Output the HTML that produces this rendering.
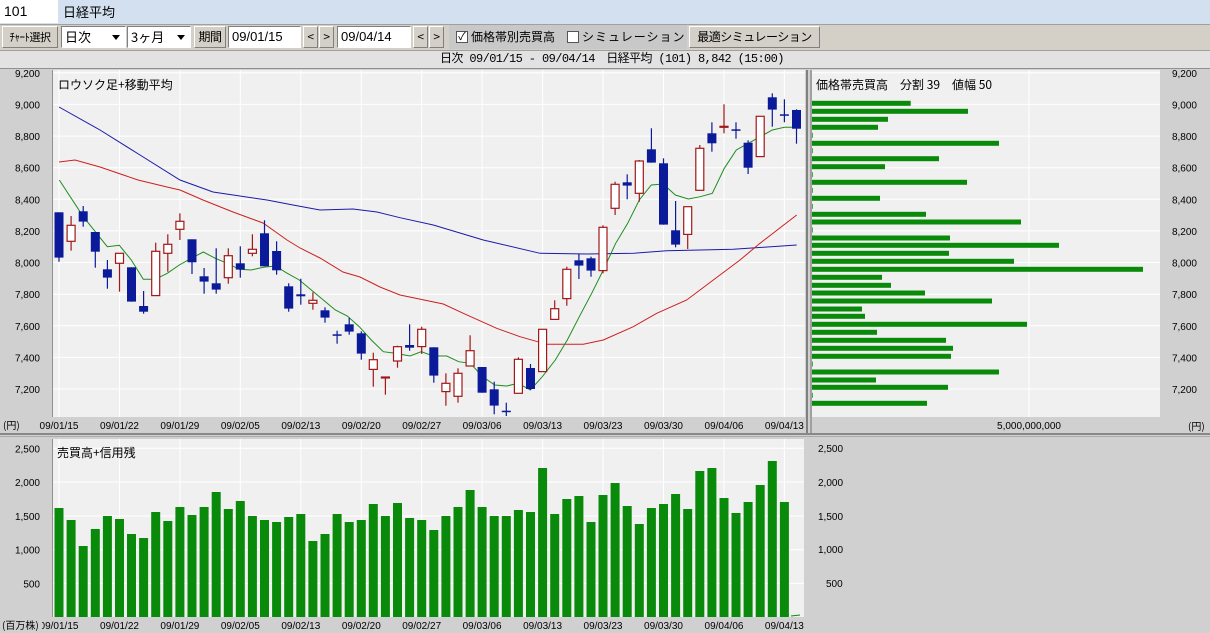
<!DOCTYPE html>
<html><head><meta charset="utf-8">
<style>
*{margin:0;padding:0;box-sizing:border-box}
body{width:1210px;height:633px;overflow:hidden;background:#d4d0c8;font-family:"Liberation Sans","Noto Sans CJK JP",sans-serif;font-size:12px;position:relative}
.a{position:absolute}
.btn{position:absolute;background:#d4d0c8;border:1px solid;border-color:#fff #808080 #808080 #fff;font-size:12px;text-align:center;line-height:20px;height:22px;top:26px;font-family:"Noto Sans CJK JP",sans-serif;letter-spacing:-0.5px}
.inp{position:absolute;background:#fff;border:1px solid;border-color:#808080 #fff #fff #808080;height:22px;top:26px;font-size:13px;line-height:20px;padding-left:3px;font-family:"Liberation Sans","Noto Sans CJK JP",sans-serif}
.sel:after{content:"";position:absolute;right:5px;top:8px;border:4px solid transparent;border-top:5px solid #000}
svg{position:absolute;left:0;top:0}
</style></head><body>
<div class="a" style="left:0;top:0;width:1210px;height:24px;background:#d3e0ef"></div>
<div class="a" style="left:0;top:0;width:58px;height:23px;background:#fff;font-size:14px;line-height:23px;padding-left:4px">101</div>
<div class="a" style="left:63px;top:0;height:23px;line-height:23px;font-size:13px;font-family:'Noto Sans CJK JP',sans-serif">日経平均</div>
<div class="a" style="left:0;top:24px;width:1210px;height:26px;background:#d4d0c8;border-top:1px solid #a0a0a0"></div>
<div class="btn" style="left:2px;width:56px;font-size:11px">ﾁｬｰﾄ選択</div>
<div class="inp sel" style="left:61px;width:65px;font-family:'Noto Sans CJK JP',sans-serif">日次</div>
<div class="inp sel" style="left:127px;width:64px;font-family:'Noto Sans CJK JP',sans-serif">3ヶ月</div>
<div class="btn" style="left:194px;width:32px">期間</div>
<div class="inp" style="left:228px;width:73px">09/01/15</div>
<div class="btn" style="left:303px;width:15px">&lt;</div>
<div class="btn" style="left:319px;width:15px">&gt;</div>
<div class="inp" style="left:337px;width:74px">09/04/14</div>
<div class="btn" style="left:413px;width:15px">&lt;</div>
<div class="btn" style="left:429px;width:15px">&gt;</div>
<div class="a" style="left:449px;top:25px;width:238px;height:24px;background:#c8c8c8"></div>
<div class="a" style="left:456px;top:31px;width:12px;height:12px;background:#fff;border:1px solid #555;font-size:11px;line-height:10px;text-align:center">✓</div>
<div class="a" style="left:471px;top:27px;font-size:12px;line-height:20px;font-family:'Noto Sans CJK JP',sans-serif">価格帯別売買高</div>
<div class="a" style="left:567px;top:31px;width:12px;height:12px;background:#fff;border:1px solid #555"></div>
<div class="a" style="left:582px;top:27px;font-size:12px;line-height:20px;font-family:'Noto Sans CJK JP',sans-serif;letter-spacing:1px">シミュレーション</div>
<div class="btn" style="left:689px;width:131px">最適シミュレーション</div>
<div class="a" style="left:0;top:50px;width:1210px;height:19px;background:#e2e2e2;border-top:1px solid #a0a0a0;border-bottom:1px solid #909090"></div>
<div class="a" style="left:440px;top:50px;line-height:19px;font-size:12px;font-family:'Liberation Mono','Noto Sans CJK JP',monospace;white-space:pre;letter-spacing:-0.6px">日次 09/01/15 - 09/04/14　日経平均 (101) 8,842 (15:00)</div>
<svg id="s" width="1210" height="633" viewBox="0 0 1210 633" style="top:0"></svg>
<script>
const s=document.getElementById('s');let h='';
const X=k=>59+12.09*k;
// backgrounds
h+='<rect x="0" y="69" width="1210" height="564" fill="#d0d0d0"/>';
h+='<rect x="53" y="70" width="752" height="347" fill="#f0f0f0"/>';
h+='<rect x="812" y="70" width="348" height="347" fill="#f0f0f0"/>';
h+='<rect x="53" y="439" width="751" height="178" fill="#f0f0f0"/>';
h+='<rect x="52" y="70" width="1" height="347" fill="#909090"/><rect x="52" y="439" width="1" height="178" fill="#909090"/>';
h+='<rect x="806" y="70" width="2" height="363" fill="#808080"/><rect x="810" y="70" width="2" height="363" fill="#a0a0a0"/>';
h+='<rect x="0" y="433" width="1210" height="2" fill="#888"/><rect x="0" y="436" width="1210" height="1" fill="#aaa"/>';
// price gridlines
const prices=[9200,9000,8800,8600,8400,8200,8000,7800,7600,7400,7200];
const PY=p=>199.3+(8400-p)*0.1581;
prices.forEach(p=>{const y=PY(p).toFixed(1);
h+=`<line x1="53" x2="805" y1="${y}" y2="${y}" stroke="#fff"/>`;
h+=`<line x1="812" x2="1160" y1="${y}" y2="${y}" stroke="#fff"/>`;
const t=(p+'').replace(/(\d)(\d{3})$/,'$1,$2');
h+=`<text x="40" y="${(+y+4).toFixed(1)}" text-anchor="end" font-size="10" font-family="Liberation Sans">${t}</text>`;
h+=`<text x="1197" y="${(+y+4).toFixed(1)}" text-anchor="end" font-size="10" font-family="Liberation Sans">${t}</text>`;});
h+='<line x1="1029" x2="1029" y1="70" y2="417" stroke="#fff"/>';
// vol gridlines
[[2500,448.3],[2000,482],[1500,516],[1000,549.7],[500,583.4]].forEach(([v,y])=>{
h+=`<line x1="53" x2="804" y1="${y}" y2="${y}" stroke="#fff"/>`;
const t=v>=1000?(v+'').replace(/(\d)(\d{3})$/,'$1,$2'):v;
h+=`<text x="40" y="${y+4}" text-anchor="end" font-size="10" font-family="Liberation Sans">${t}</text>`;});
h+='<text x="1022" y="${0}" font-size="10"></text>';
h+='<text x="818" y="452" font-size="10" font-family="Liberation Sans">2,500</text>';
h+='<text x="818" y="486" font-size="10" font-family="Liberation Sans">2,000</text>';
h+='<text x="818" y="520" font-size="10" font-family="Liberation Sans">1,500</text>';
h+='<text x="818" y="553" font-size="10" font-family="Liberation Sans">1,000</text>';
h+='<text x="826" y="587" font-size="10" font-family="Liberation Sans">500</text>';
// date gridlines
const dates=['09/01/15','09/01/22','09/01/29','09/02/05','09/02/13','09/02/20','09/02/27','09/03/06','09/03/13','09/03/23','09/03/30','09/04/06','09/04/13'];
dates.forEach((d,i)=>{const x=X(i*5).toFixed(1);
h+=`<line x1="${x}" x2="${x}" y1="70" y2="417" stroke="#fff"/><line x1="${x}" x2="${x}" y1="439" y2="617" stroke="#fff"/>`;
h+=`<text x="${x}" y="429" text-anchor="middle" font-size="10" font-family="Liberation Sans">${d}</text>`;
h+=`<text x="${x}" y="629" text-anchor="middle" font-size="10" font-family="Liberation Sans">${d}</text>`;});
h+='<text x="3" y="429" font-size="10" font-family="Noto Sans CJK JP,sans-serif">(円)</text>';
h+='<text x="1188" y="430" font-size="10" font-family="Noto Sans CJK JP,sans-serif">(円)</text>';
h+='<text x="1029" y="429" text-anchor="middle" font-size="10" font-family="Liberation Sans">5,000,000,000</text>';
h+='<rect x="0" y="619" width="42" height="14" fill="#d0d0d0"/><text x="2" y="629" font-size="10" font-family="Noto Sans CJK JP,sans-serif">(百万株)</text>';
// profile bars
const pb=[[130,332],[154,504],[178,264],[202,234],[226,38],[250,597],[272,38],[296,417],[320,255],[344,38],[367,501],[391,38],[415,240],[439,38],[463,378],[486,663],[510,38],[534,450],[556,777],[580,447],[604,642],[628,1029],[652,246],[676,273],[699,375],[723,576],[747,186],[769,195],[793,681],[817,231],[841,438],[865,459],[889,453],[912,38],[936,597],[960,228],[982,444],[1006,38],[1030,381]];
pb.forEach(([y,x])=>{const yy=60+y/3-2.5,xe=800+x/3;h+=`<rect x="812" y="${yy.toFixed(1)}" width="${(xe-812).toFixed(1)}" height="5" fill="#0a8a0a"/>`;});
// volumes
const vt=[234,270,348,297,258,267,312,324,246,273,231,255,231,186,237,213,258,270,276,261,252,333,312,252,276,270,222,258,219,264,270,300,258,231,180,231,258,258,240,246,114,252,207,198,276,195,159,228,282,234,222,192,237,123,114,204,249,216,165,93,216];
vt.forEach((t,k)=>{const y=430+t/3;h+=`<rect x="${(X(k)-4.5).toFixed(1)}" y="${y.toFixed(1)}" width="9" height="${(617-y).toFixed(1)}" fill="#0a8a0a"/>`;});
h+=`<line x1="791" x2="800" y1="616" y2="615" stroke="#0a8a0a"/>`;
// MAs
const pl=(pts,c)=>h+=`<polyline fill="none" stroke="${c}" stroke-width="1" points="${pts.map(p=>p.join(',')).join(' ')}"/>`;
const z2=a=>a.map(([x,y])=>[(x/3).toFixed(1),(180+y/3).toFixed(1)]);
const z3=a=>a.map(([x,y])=>[(400+x/3).toFixed(1),(80+y/3).toFixed(1)]);
pl([[59,107],[100,130],[140,155],[180,180],[213,192],[267,200],[293,205],[320,210],[353,209],[377,212]].concat(z3([[0,413],[100,435],[250,480],[420,520],[560,522],[700,520],[800,512],[1000,508],[1190,495]])),'#1a1aa8');
pl([[59,162],[75,160],[100,167],[138,180],[167,187],[180,190],[203,200],[233,212],[263,223],[287,240],[300,248],[320,258],[343,272],[360,277],[380,287]].concat(z3([[0,645],[130,672],[190,700],[290,745],[360,770],[440,793],[550,793],[610,780],[700,740],[770,700],[860,660],[940,600],[1020,540],[1080,490],[1190,405]])),'#cc2020');
pl(z2([[178,0],[250,110],[286,155],[322,200],[358,196],[394,240],[430,298],[466,298],[502,280],[538,255],[574,235],[610,216],[646,235],[682,250],[718,268],[754,270],[790,262],[826,258],[862,280],[898,300],[934,330],[970,360],[1006,390],[1042,408],[1078,440],[1114,480],[1150,515],[1186,520]]).concat(z3([[30,828],[64,815],[100,828],[140,828],[176,845],[211,850],[248,890],[284,915],[320,918],[355,910],[391,930],[427,890],[466,840],[502,780],[538,710],[575,640],[610,570],[647,490],[683,430],[718,360],[754,315],[790,312],[826,345],[865,357],[901,350],[937,340],[973,265],[1009,210],[1045,190],[1081,170],[1117,150],[1153,142],[1190,142]])),'#1e8c1e');
// candles [bt,bb,wt,wb,c]
const cA=[[97,233,97,245,'b'],[136,184,108,212,'r'],[94,125,78,140,'b'],[156,215,156,263,'b'],[268,293,240,326,'b'],[220,250,220,335,'r'],[262,365,262,365,'b'],[378,395,333,401,'b'],[214,347,188,347,'r'],[193,220,163,275,'r'],[124,148,100,180,'r'],[178,247,178,282,'b'],[289,305,264,341,'b'],[310,329,205,341,'b'],[227,293,205,311,'r'],[250,269,199,293,'b'],[208,220,163,229,'r'],[160,259,121,259,'b'],[213,271,184,284,'b'],[319,386,310,395,'b'],[343,349,296,374,'b'],[361,370,337,389,'r'],[391,413,382,428,'b'],[463,466,452,491,'b'],[433,455,413,464,'b'],[460,521,454,539,'b'],[539,568,518,620,'r'],[591,594,591,644,'r'],[500,543,497,563,'r']];
const cB=[[795,803,733,812,'b'],[748,800,740,822,'r'],[802,887,802,908,'b'],[910,935,880,977,'r'],[880,949,865,968,'r'],[812,858,766,858,'r'],[861,938,861,938,'b'],[928,977,905,1003,'b'],[992,995,968,1008,'b'],[838,940,832,940,'r'],[864,927,852,930,'b'],[748,875,748,875,'r'],[686,718,661,718,'r'],[568,656,560,677,'r'],[541,557,521,597,'b'],[535,572,530,590,'b'],[442,572,436,580,'r'],[313,385,305,405,'r'],[307,317,283,358,'b'],[243,340,240,365,'r'],[208,248,145,248,'b'],[250,434,235,434,'b'],[451,494,363,502,'b'],[380,463,380,507,'r'],[205,331,195,331,'r'],[160,190,127,215,'b'],[139,142,73,160,'r'],[148,151,127,176,'b'],[188,263,181,282,'b'],[109,230,109,230,'r'],[52,89,40,140,'b'],[103,106,58,127,'b'],[90,146,88,191,'b']];
const drawC=(c,k,off)=>{const x=X(k),[bt,bb,wt,wb,cl]=c;const y1=off+bt/3,y2=off+bb/3,w1=off+wt/3,w2=off+wb/3;
if(cl==='b'){h+=`<line x1="${x.toFixed(1)}" x2="${x.toFixed(1)}" y1="${w1.toFixed(1)}" y2="${w2.toFixed(1)}" stroke="#0a1a98" stroke-width="1.2"/><rect x="${(x-4.5).toFixed(1)}" y="${y1.toFixed(1)}" width="9" height="${Math.max(1.5,y2-y1).toFixed(1)}" fill="#0a1a98"/>`;}
else{h+=`<line x1="${x.toFixed(1)}" x2="${x.toFixed(1)}" y1="${w1.toFixed(1)}" y2="${y1.toFixed(1)}" stroke="#a01818" stroke-width="1.2"/><line x1="${x.toFixed(1)}" x2="${x.toFixed(1)}" y1="${y2.toFixed(1)}" y2="${w2.toFixed(1)}" stroke="#a01818" stroke-width="1.2"/><rect x="${(x-4).toFixed(1)}" y="${y1.toFixed(1)}" width="8" height="${Math.max(1,y2-y1).toFixed(1)}" fill="#fff" stroke="#a01818" stroke-width="1.2"/>`;}};
cA.forEach((c,k)=>drawC(c,k,180));
cB.forEach((c,i)=>drawC(c,29+i,80));
// titles
h+='<text x="58" y="89" font-size="12" font-family="Noto Sans CJK JP,sans-serif">ロウソク足+移動平均</text>';
h+='<text x="816" y="89" font-size="12" font-family="Noto Sans CJK JP,sans-serif">価格帯売買高　分割 39　値幅 50</text>';
h+='<text x="57" y="457" font-size="12" font-family="Noto Sans CJK JP,sans-serif">売買高+信用残</text>';
s.innerHTML=h;
</script>
</body></html>
